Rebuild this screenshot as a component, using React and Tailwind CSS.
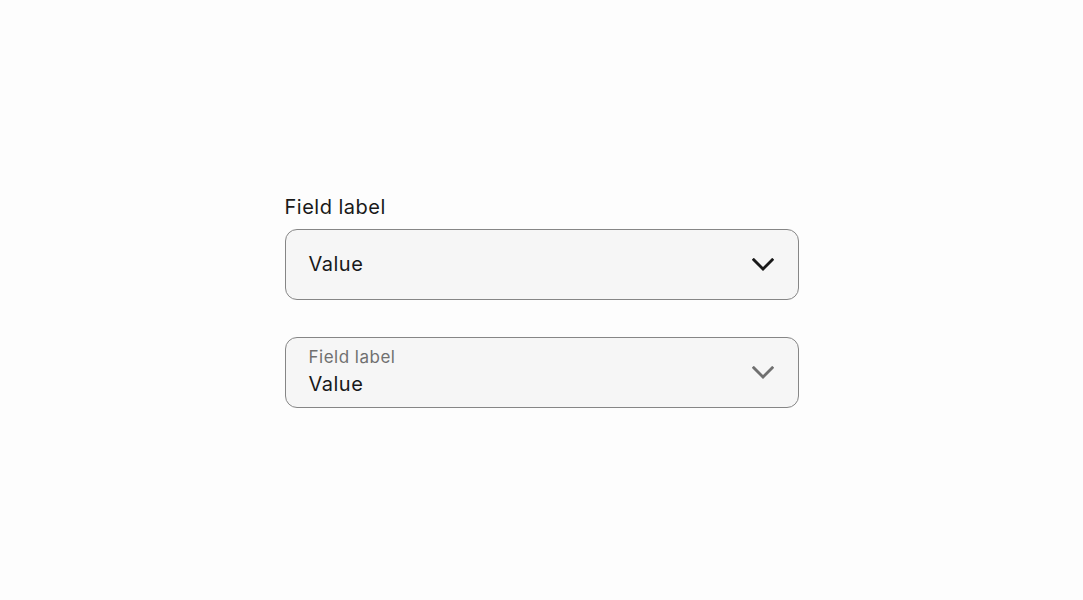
import React from 'react';

const Chevron = ({ color }) => (
  <svg width="22" height="13" viewBox="0 0 22 13" fill="none" className="shrink-0">
    <polyline
      points="1.8,1.8 11,11 20.2,1.8"
      stroke={color}
      strokeWidth="2.8"
      strokeLinecap="square"
      strokeLinejoin="miter"
    />
  </svg>
);

const App = () => {
  return (
    <div
      className="flex h-[600px] w-full items-center justify-center bg-[#fdfdfd]"
      style={{ fontFamily: 'Inter, "Noto Sans", sans-serif' }}
    >
      <div className="flex w-[514px] flex-col">
        <label className="mb-[8px] text-[20px] leading-[28px] text-[#191919] tracking-[0.5px]">Field label</label>
        <div className="flex h-[71px] items-center justify-between rounded-[12px] border-[1.5px] border-[#868686] bg-[#f6f6f6] pl-[23px] pr-[24px]">
          <span className="text-[20px] leading-[28px] text-[#191919] tracking-[0.5px]">Value</span>
          <Chevron color="#191919" />
        </div>

        <div className="mt-[37px] flex h-[71px] items-center justify-between rounded-[12px] border-[1.5px] border-[#868686] bg-[#f6f6f6] pl-[23px] pr-[24px]">
          <div className="flex flex-col gap-[3px]">
            <span className="text-[17px] leading-[20px] text-[#707070] tracking-[0.5px]">Field label</span>
            <span className="text-[20px] leading-[28px] text-[#191919] tracking-[0.5px]">Value</span>
          </div>
          <Chevron color="#707070" />
        </div>
      </div>
    </div>
  );
};

export default App;
